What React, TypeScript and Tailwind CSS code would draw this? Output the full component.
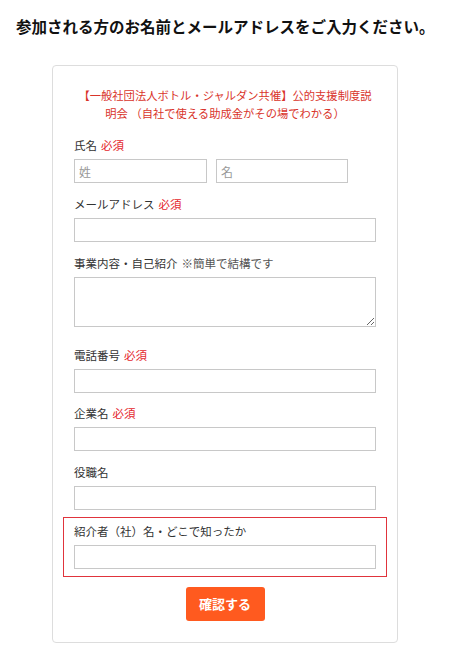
import React from "react";

const font = { fontFamily: '"Noto Sans CJK JP", "Noto Sans", sans-serif' };

function Label({ text, req, note }: { text: string; req?: boolean; note?: string }) {
  return (
    <div className="h-[18px] leading-[18px] text-[11.5px] text-[#333] mb-[5px] whitespace-nowrap">
      {text}
      {req && <span className="ml-[4px] text-[#e4262d]">必須</span>}
      {note && <span className="ml-[4px] text-[#555]">{note}</span>}
    </div>
  );
}

function Input({ className = "" }: { className?: string }) {
  return (
    <input
      type="text"
      className={`block w-[302px] h-[24px] border border-[#c8c8c8] bg-white px-[4px] text-[12px] outline-none ${className}`}
    />
  );
}

export default function App() {
  return (
    <div className="bg-white w-[450px] min-h-[660px]" style={font}>
      <div className="pt-[16px] pl-[16px] text-[15.5px] leading-[20px] font-bold text-[#111] whitespace-nowrap">
        参加される方のお名前とメールアドレスをご入力ください。
      </div>
      <div className="mt-[29px] ml-[52px] w-[346px] border border-[#dddddd] rounded-[4px] px-[21px] pt-[20px] pb-[21px]">
        <div className="text-center text-[11.3px] leading-[18px] text-[#d9342b] whitespace-nowrap">
          【一般社団法人ボトル・ジャルダン共催】公的支援制度説
          <br />
          明会 （自社で使える助成金がその場でわかる）
        </div>

        <div className="mt-[14px]">
          <Label text="氏名" req />
          <div className="flex gap-[9px]">
            <input
              type="text"
              placeholder="姓"
              className="block w-[133px] h-[24px] border border-[#c8c8c8] px-[4px] text-[12px] outline-none placeholder:text-[#999]"
            />
            <input
              type="text"
              placeholder="名"
              className="block w-[132px] h-[24px] border border-[#c8c8c8] px-[4px] text-[12px] outline-none placeholder:text-[#999]"
            />
          </div>
        </div>

        <div className="mt-[12px]">
          <Label text="メールアドレス" req />
          <Input />
        </div>

        <div className="mt-[12px]">
          <Label text="事業内容・自己紹介" note="※簡単で結構です" />
          <textarea className="block w-[302px] h-[50px] border border-[#c8c8c8] outline-none text-[12px] p-[4px]" />
        </div>

        <div className="mt-[19px]">
          <Label text="電話番号" req />
          <Input />
        </div>

        <div className="mt-[11px]">
          <Label text="企業名" req />
          <Input />
        </div>

        <div className="mt-[12px]">
          <Label text="役職名" />
          <Input />
        </div>

        <div className="mt-[7px] -mx-[11px] border border-[#e0343c] px-[10px] pt-[4px] pb-[7px]">
          <Label text="紹介者（社）名・どこで知ったか" />
          <Input />
        </div>

        <div className="mt-[10px] flex justify-center">
          <button className="w-[79px] h-[34px] rounded-[3px] bg-[#ff5a1f] text-white font-bold text-[13px]">
            確認する
          </button>
        </div>
      </div>
    </div>
  );
}
